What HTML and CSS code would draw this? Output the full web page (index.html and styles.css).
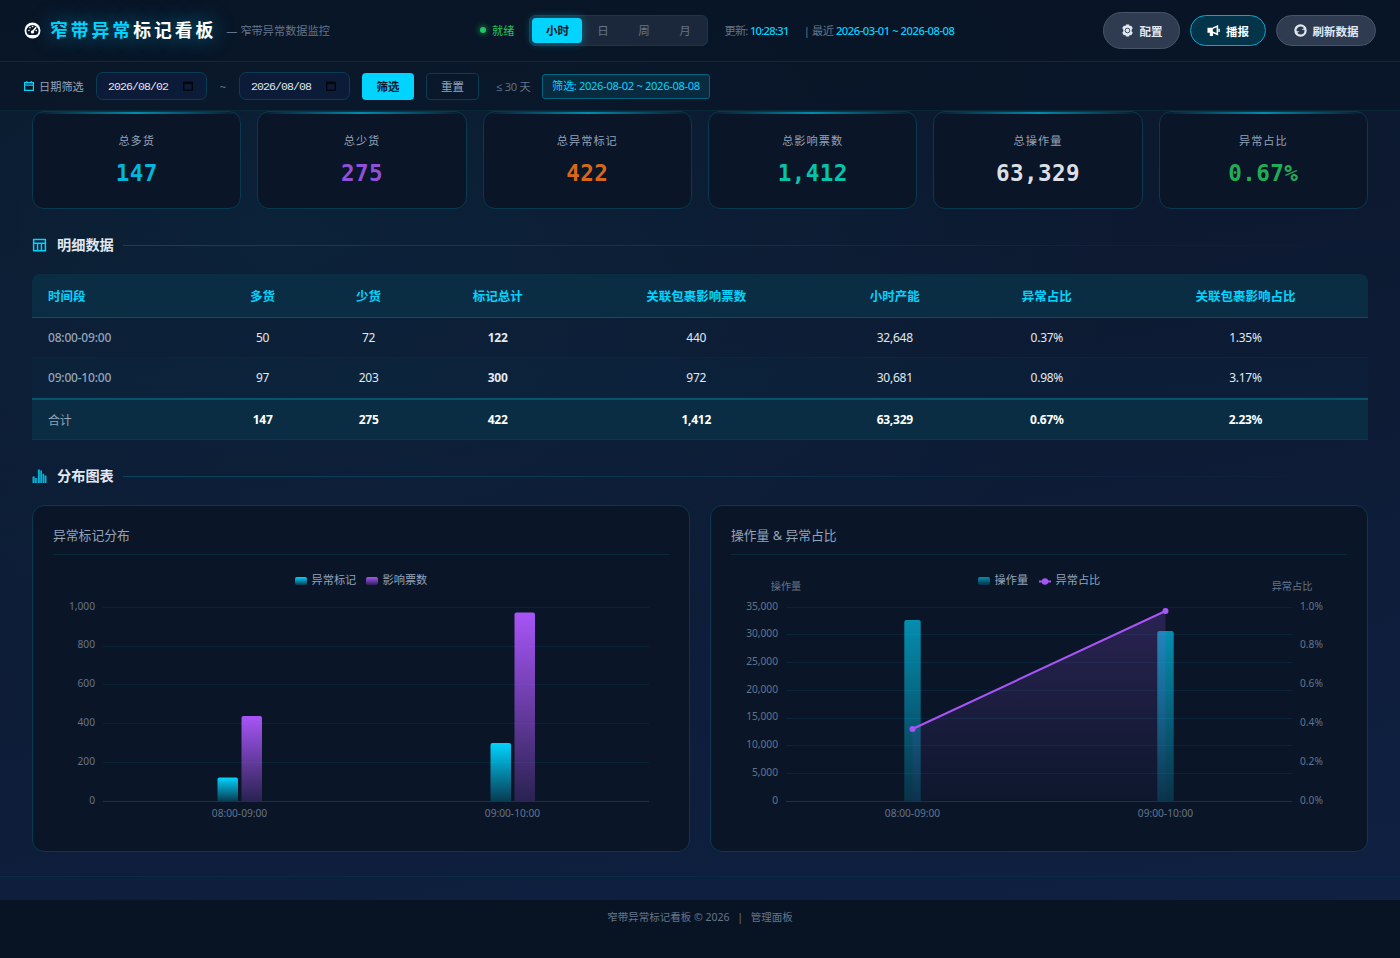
FILE: index.html
```
<!DOCTYPE html>
<html lang="zh-CN">
<head>
    <meta charset="UTF-8"/>
    <title>窄带异常标记看板</title>
    <link rel="stylesheet" href="styles.css">
</head>
<body>
    <div class="page">
        <!-- Header -->
        <header class="header">
            <div class="brand">
                <svg class="brand-icon" viewBox="0 0 16 16"><circle cx="8" cy="8" r="7.500" fill="#fff"/><path d="M3.2 11.5A5.6 5.6 0 1 1 12.8 11.5L11 12.2H5Z" fill="#0a1628"/><path d="M4.6 8h.1M5.6 5.4h.1M8 4.3h.1M11.5 8h.1M7.8 9.4L11 5.4" stroke="#fff" stroke-width="1.5" stroke-linecap="round"/><circle cx="8" cy="9.3" r="1.6" fill="#fff"/></svg>
                <h1><span>窄带异常</span>标记看板</h1>
                <small>— 窄带异常数据监控</small>
            </div>
            <div class="center">
                <span class="status"><i></i>就绪</span>
                <div class="tabs">
                    <a class="active">小时</a>
                    <a>日</a>
                    <a>周</a>
                    <a>月</a>
                </div>
                <span class="info">更新: <b>10:28:31</b></span>
                <span class="info range">| 最近 <b>2026-03-01 ~ 2026-08-08</b></span>
            </div>
            <div class="actions">
                <button class="btn config"><svg viewBox="0 0 14 14"><path d="M5.3 .5h3.4l.5 1.700 1.800-.4 1.700 2.900L11.500 6v2l1.200 1.300-1.700 2.900-1.800-.4-.5 1.700H5.300l-.5-1.700-1.800.4-1.700-2.900L2.500 8V6L1.300 4.700 3 1.800l1.800.4Z" fill="currentColor"/><circle cx="7" cy="7" r="2.500" fill="none" stroke="#334155" stroke-width="1"/></svg>配置</button>
                <button class="btn report"><svg viewBox="0 0 14 14"><path d="M.5 4h5L12 1v11.500L6.500 10v3H3V9.500H.5Z" fill="currentColor"/><path d="M6.300 5.300L10.300 3.600v6.200L6.300 8.100Z" fill="#04344a"/><path d="M13 5v3.500" stroke="currentColor" stroke-width="1.600"/></svg>播报</button>
                <button class="btn"><svg viewBox="0 0 14 14"><circle cx="7" cy="7" r="5.500" fill="none" stroke="currentColor" stroke-width="2.400"/><path d="M8.200 6.200h4.500V3ZM5.800 7.800H1.300V11Z" fill="currentColor"/></svg>刷新数据</button>
            </div>
        </header>

        <!-- Date filter -->
        <div class="filter">
            <span class="filter-label"><svg viewBox="0 0 10 10"><path d="M.6 1.700h8.800v7.600H.6ZM.6 4.200h8.800M2.800 0v2.600M7.200 0v2.600" fill="none" stroke="#00d4ff" stroke-width="1.200"/></svg>日期筛选</span>
            <span class="date">2026/08/02<svg viewBox="0 0 10 10"><path d="M.7 1.500h8.600v7.800H.7Z" fill="none" stroke="#02060c" stroke-width="1.400"/><path d="M.7 2h8.600" stroke="#02060c" stroke-width="2.400"/></svg></span>
            <span class="tilde">~</span>
            <span class="date">2026/08/08<svg viewBox="0 0 10 10"><path d="M.7 1.500h8.600v7.800H.7Z" fill="none" stroke="#02060c" stroke-width="1.400"/><path d="M.7 2h8.600" stroke="#02060c" stroke-width="2.400"/></svg></span>
            <button class="apply">筛选</button>
            <button class="reset">重置</button>
            <span class="limit">≤ 30 天</span>
            <span class="tag">筛选: 2026-08-02 ~ 2026-08-08</span>
        </div>

        <main>
            <!-- Summary cards -->
            <div class="cards">
                <div class="card"><span>总多货</span><strong class="cyan">147</strong></div>
                <div class="card"><span>总少货</span><strong class="purple">275</strong></div>
                <div class="card"><span>总异常标记</span><strong class="orange">422</strong></div>
                <div class="card"><span>总影响票数</span><strong class="teal">1,412</strong></div>
                <div class="card"><span>总操作量</span><strong class="white">63,329</strong></div>
                <div class="card"><span>异常占比</span><strong class="green">0.67%</strong></div>
            </div>

            <h2 class="section">
                <svg viewBox="0 0 14 14"><path d="M1.500 1.500h11v10.500h-11ZM1 4.800h12M5.200 5v7M8.800 5v7" fill="none" stroke="#00d4ff" stroke-width="1.400" stroke-linejoin="round"/></svg>
                明细数据
            </h2>

            <table>
                <colgroup>
                    <col class="c-time"><col class="c-small"><col class="c-small"><col class="c-mid">
                    <col class="c-wide"><col class="c-mid"><col class="c-mid"><col class="c-wide">
                </colgroup>
                <thead>
                    <tr><th>时间段</th><th>多货</th><th>少货</th><th>标记总计</th><th>关联包裹影响票数</th><th>小时产能</th><th>异常占比</th><th>关联包裹影响占比</th></tr>
                </thead>
                <tbody>
                    <tr><td>08:00-09:00</td><td>50</td><td>72</td><td><b>122</b></td><td>440</td><td>32,648</td><td>0.37%</td><td>1.35%</td></tr>
                    <tr><td>09:00-10:00</td><td>97</td><td>203</td><td><b>300</b></td><td>972</td><td>30,681</td><td>0.98%</td><td>3.17%</td></tr>
                </tbody>
                <tfoot>
                    <tr><td>合计</td><td>147</td><td>275</td><td>422</td><td>1,412</td><td>63,329</td><td>0.67%</td><td>2.23%</td></tr>
                </tfoot>
            </table>

            <h2 class="section">
                <svg viewBox="0 0 14 14"><path d="M.5 7h2v6h-2ZM2.900 8.500h1.600V13H2.900ZM5.500 .5h1.800V13H5.500ZM7.700 1.500h1.600V13H7.700ZM9.800 4.500h1.600V13H9.800ZM11.800 6h1.700v7h-1.700Z" fill="#00b8de"/></svg>
                分布图表
            </h2>

            <div class="charts">
                <div class="chart">
                    <h3>异常标记分布</h3>
                    <svg width="616" height="276" viewBox="0 0 616 276">
                        <defs>
                            <linearGradient id="cyan" x2="0" y2="1"><stop stop-color="#00d4ff"/><stop offset="1" stop-color="#00d4ff" stop-opacity=".2"/></linearGradient>
                            <linearGradient id="purple" x2="0" y2="1"><stop stop-color="#a855f7"/><stop offset="1" stop-color="#a855f7" stop-opacity=".2"/></linearGradient>
                        </defs>
                        <!-- legend -->
                        <rect x="242" y="22" width="12" height="8" rx="2" fill="url(#cyan)"/>
                        <text class="legend" x="258.500" y="29">异常标记</text>
                        <rect x="313" y="22" width="12" height="8" rx="2" fill="url(#purple)"/>
                        <text class="legend" x="329.500" y="29">影响票数</text>
                        <path class="grid" d="M50 52.500H596M50 91.500H596M50 129.500H596M50 168.500H596M50 207.500H596"/>
                        <g class="end">
                            <text x="42" y="55">1,000</text>
                            <text x="42" y="93">800</text>
                            <text x="42" y="132">600</text>
                            <text x="42" y="171">400</text>
                            <text x="42" y="210">200</text>
                            <text x="42" y="249">0</text>
                        </g>
                        <path fill="url(#cyan)" d="M164.500 246V224.500a2 2 0 0 1 2-2h16.500a2 2 0 0 1 2 2V246Z"/>
                        <path fill="url(#purple)" d="M188.500 246V163a2 2 0 0 1 2-2h16.500a2 2 0 0 1 2 2V246Z"/>
                        <path fill="url(#cyan)" d="M437.500 246V190a2 2 0 0 1 2-2h16.500a2 2 0 0 1 2 2V246Z"/>
                        <path fill="url(#purple)" d="M461.500 246V59.500a2 2 0 0 1 2-2h16.500a2 2 0 0 1 2 2V246Z"/>
                        <path class="axis" d="M50 246.500H596"/>
                        <g class="mid">
                            <text x="186.500" y="262">08:00-09:00</text>
                            <text x="459.500" y="262">09:00-10:00</text>
                        </g>
                    </svg>
                </div>
                <div class="chart">
                    <h3>操作量 &amp; 异常占比</h3>
                    <svg width="616" height="276" viewBox="0 0 616 276">
                        <defs>
                            <linearGradient id="volume" x2="0" y2="1"><stop stop-color="#00d4ff" stop-opacity=".63"/><stop offset="1" stop-color="#00d4ff" stop-opacity=".15"/></linearGradient>
                            <linearGradient id="area" x2="0" y2="1"><stop stop-color="#a855f7" stop-opacity=".2"/><stop offset="1" stop-color="#a855f7" stop-opacity=".02"/></linearGradient>
                        </defs>
                        <!-- legend -->
                        <rect x="247" y="22" width="12" height="8" rx="2" fill="url(#volume)"/>
                        <text class="legend" x="263.500" y="29">操作量</text>
                        <path d="M308 26.500h12" stroke="#a855f7" stroke-width="2"/>
                        <circle cx="314" cy="26.500" r="3.200" fill="#a855f7"/>
                        <text class="legend" x="324.500" y="29">异常占比</text>
                        <path class="grid" d="M55 52.500H561M55 79.500H561M55 107.500H561M55 135.500H561M55 163.500H561M55 190.500H561M55 218.500H561"/>
                        <g class="mid">
                            <text x="55" y="35">操作量</text>
                            <text x="561" y="35">异常占比</text>
                        </g>
                        <g class="end">
                            <text x="47" y="55">35,000</text>
                            <text x="47" y="82">30,000</text>
                            <text x="47" y="110">25,000</text>
                            <text x="47" y="138">20,000</text>
                            <text x="47" y="165">15,000</text>
                            <text x="47" y="193">10,000</text>
                            <text x="47" y="221">5,000</text>
                            <text x="47" y="249">0</text>
                        </g>
                        <g>
                            <text x="569" y="55">1.0%</text>
                            <text x="569" y="93">0.8%</text>
                            <text x="569" y="132">0.6%</text>
                            <text x="569" y="171">0.4%</text>
                            <text x="569" y="210">0.2%</text>
                            <text x="569" y="249">0.0%</text>
                        </g>
                        <path fill="url(#volume)" d="M173.300 246V67a2 2 0 0 1 2-2h12.400a2 2 0 0 1 2 2V246Z"/>
                        <path fill="url(#volume)" d="M426.300 246V78a2 2 0 0 1 2-2h12.400a2 2 0 0 1 2 2V246Z"/>
                        <path class="axis" d="M55 246.500H561"/>
                        <path fill="url(#area)" d="M181.500 174L434.500 56V246H181.500Z"/>
                        <path d="M181.500 174L434.500 56" stroke="#a855f7" stroke-width="2"/>
                        <circle cx="181.500" cy="174" r="3" fill="#a855f7"/>
                        <circle cx="434.500" cy="56" r="3" fill="#a855f7"/>
                        <g class="mid">
                            <text x="181.500" y="262">08:00-09:00</text>
                            <text x="434.500" y="262">09:00-10:00</text>
                        </g>
                    </svg>
                </div>
            </div>
        </main>
    </div>
    <footer>窄带异常标记看板 © 2026 <i>|</i> 管理面板</footer>
</body>
</html>
```
FILE: styles.css
```
* {
    margin: 0;
    padding: 0;
    box-sizing: border-box;
}

body {
    height: 958px;
    overflow: hidden;
    background: #081424;
    color: #e2e8f0;
    font: 11.2px "Noto Sans", "Noto Sans CJK SC", sans-serif;
}

svg {
    display: block;
    flex: none;
}

button {
    font: inherit;
    cursor: pointer;
}

.page {
    height: 900px;
    background:
        radial-gradient(ellipse at 20% 25%, rgba(0, 212, 255, 0.05), transparent 55%),
        linear-gradient(170deg, #0a1628 0%, #0d1b35 55%, #0f2042 100%);
}

/* Header */
.header {
    display: flex;
    justify-content: space-between;
    align-items: center;
    height: 62px;
    padding: 0 24px;
    background: rgba(8, 20, 36, 0.75);
    border-bottom: 1px solid #0b2c40;
}

.brand {
    display: flex;
    align-items: center;
    width: 307px;
    padding-bottom: 1px;
    white-space: nowrap;
}

.brand-icon {
    width: 17px;
    height: 17px;
    margin-right: 9px;
}

.brand h1 {
    font-size: 17.8px;
    letter-spacing: 3px;
    line-height: 24px;
    color: #fff;
    text-shadow: 0 0 20px rgba(0, 212, 255, 0.5);
}

.brand h1 span {
    color: #00d4ff;
}

.brand small {
    margin-left: 10px;
    font-size: 11.2px;
    color: #64748b;
}

.center {
    display: flex;
    align-items: center;
    width: 474px;
    white-space: nowrap;
}

.status {
    display: flex;
    align-items: center;
    gap: 6px;
    width: 35px;
    margin-right: 15px;
    padding-bottom: 1px;
    color: #22c55e;
}

.status i {
    flex: none;
    width: 6px;
    height: 6px;
    border-radius: 50%;
    background: #22c55e;
    box-shadow: 0 0 6px #22c55e;
}

.tabs {
    display: flex;
    flex: none;
    width: 179px;
    height: 31px;
    padding: 2px;
    border: 1px solid #133a50;
    border-radius: 6px;
    background: #1b283b;
}

.tabs a {
    flex: 1;
    line-height: 25px;
    text-align: center;
    font-size: 11.5px;
    color: #64748b;
}

.tabs .active {
    flex: 0 0 50px;
    border-radius: 4px;
    background: #00d4ff;
    box-shadow: 0 0 10px rgba(0, 212, 255, 0.4);
    color: #0a1628;
    font-weight: bold;
}

.info {
    margin-left: 16px;
    padding-bottom: 2px;
    color: #64748b;
    letter-spacing: -0.7px;
}

.info b {
    font-weight: 500;
    color: #00d4ff;
}

.info.range {
    margin-left: 15px;
    letter-spacing: -0.45px;
}

.actions {
    display: flex;
    align-items: center;
    gap: 10px;
}

.btn {
    display: flex;
    align-items: center;
    justify-content: center;
    gap: 6px;
    width: 100px;
    height: 31px;
    border: 1px solid #475569;
    border-radius: 20px;
    background: #2e3b50;
    color: #e2e8f0;
    font-size: 11.5px;
    font-weight: bold;
}

.btn svg {
    width: 13px;
    height: 13px;
}

.btn.config {
    width: 77px;
    height: 37px;
}

.btn.report {
    width: 76px;
    border-color: #00a9cf;
    background: #04344a;
    color: #fff;
}

/* Date filter */
.filter {
    display: flex;
    align-items: center;
    gap: 12px;
    height: 49px;
    padding: 0 24px;
    background: rgba(8, 20, 36, 0.6);
    border-bottom: 1px solid #0b2839;
    white-space: nowrap;
}

.filter-label {
    display: flex;
    align-items: center;
    gap: 5px;
    width: 60px;
    padding-bottom: 1px;
    color: #94a3b8;
}

.filter-label svg {
    width: 10px;
    height: 10px;
}

.date {
    display: flex;
    align-items: center;
    justify-content: space-between;
    width: 111px;
    height: 28px;
    padding: 0 13px 0 11px;
    border: 1px solid #0b3c56;
    border-radius: 7px;
    background: #0c1b37;
    color: #e2e8f0;
    font: 500 11.5px "Liberation Mono", monospace;
    letter-spacing: -0.9px;
}

.date svg {
    width: 10px;
    height: 10px;
}

.tilde {
    width: 8px;
    text-align: center;
    color: #64748b;
}

.apply, .reset {
    width: 52px;
    height: 27px;
    border: 0;
    border-radius: 4px;
    background: #00d4ff;
    color: #0a1628;
    font-size: 11.5px;
    font-weight: bold;
}

.reset {
    width: 53px;
    border: 1px solid #0b3c52;
    background: none;
    color: #94a3b8;
    font-weight: normal;
}

.limit {
    width: 39px;
    padding-left: 5px;
    color: #64748b;
    font-family: "Open Sans", "Noto Sans CJK SC", sans-serif;
    letter-spacing: -0.3px;
}

.tag {
    width: 168px;
    height: 25px;
    line-height: 22px;
    border: 1px solid #006680;
    border-radius: 3px;
    background: #082b40;
    color: #00d4ff;
    text-align: center;
    letter-spacing: -0.35px;
}

main {
    height: 766px;
    padding: 0 32px;
    border-bottom: 1px solid #0b2a43;
}

/* Summary cards */
.cards {
    display: grid;
    grid-template-columns: repeat(6, 1fr);
    gap: 16px;
}

.card {
    display: flex;
    flex-direction: column;
    align-items: center;
    height: 98px;
    border: 1px solid #073a50;
    border-radius: 12px;
    background:
        linear-gradient(90deg, transparent, #008cae, transparent) top / 100% 2px no-repeat,
        #0a1528;
}

.card span {
    margin-top: 19px;
    line-height: 19px;
    letter-spacing: 1px;
    color: #94a3b8;
}

.card strong {
    margin-top: 7px;
    font: bold 22.6px/32px "DejaVu Sans Mono", monospace;
    letter-spacing: 0.4px;
}

.cyan { color: #02b5dd; }
.purple { color: #9150d9; }
.orange { color: #d8671a; }
.teal { color: #05c4ac; }
.white { color: #dcdfe4; }
.green { color: #20ad56; }

/* Section title with a fading rule */
.section {
    display: flex;
    align-items: center;
    height: 20px;
    margin: 26px 0 19px;
    font-size: 14.2px;
    line-height: 20px;
}

.section svg {
    width: 15px;
    height: 15px;
    margin-right: 10px;
}

.section::after {
    content: "";
    flex: 1;
    height: 1px;
    margin-left: 9px;
    background: linear-gradient(90deg, #0a4660, transparent);
}

/* Detail table */
table {
    width: 1336px;
    table-layout: fixed;
    border-spacing: 0;
    border-radius: 8px 8px 0 0;
    overflow: hidden;
    font-size: 12px;
    letter-spacing: -0.25px;
}

.c-time { width: 177.5px; }
.c-small { width: 106px; }
.c-mid { width: 152px; }
.c-wide { width: 245px; }

th, td {
    height: 40px;
    text-align: center;
    border-bottom: 1px solid #0b273c;
}

th {
    height: 44px;
    font-size: 12.5px;
    letter-spacing: 0;
    color: #00d4ff;
    background: #0b2d43;
    border-bottom-color: #075069;
}

th:first-child, td:first-child {
    padding-left: 16px;
    text-align: left;
}

td:first-child {
    color: #94a3b8;
    font-weight: 500;
    letter-spacing: -0.2px;
}

tbody tr:nth-child(2) td {
    background: rgba(0, 212, 255, 0.02);
}

tfoot td {
    height: 42px;
    border-top: 2px solid #06536d;
    border-bottom-color: #0b3950;
    background: #0a2d43;
    font-weight: bold;
    color: #fff;
}

tfoot td:first-child {
    font-weight: normal;
}

/* Charts */
.charts {
    display: grid;
    grid-template-columns: 658px 658px;
    gap: 20px;
}

.chart {
    height: 347px;
    padding: 0 20px;
    border: 1px solid #073a50;
    border-radius: 12px;
    background: #0a1628;
}

.chart h3 {
    height: 49px;
    padding-top: 11px;
    border-bottom: 1px solid #0a2a3c;
    font-size: 12.8px;
    font-weight: normal;
    line-height: 36px;
    color: #94a3b8;
}

.chart text {
    font-size: 10.2px;
    fill: #64748b;
}

.chart .legend {
    font-size: 11.2px;
    fill: #94a3b8;
}

.end { text-anchor: end; }
.mid { text-anchor: middle; }

.grid {
    stroke: #0a2336;
}

.axis {
    stroke: #0a3a4f;
}

footer {
    padding-top: 9px;
    text-align: center;
    color: #64748b;
    font-size: 10.5px;
    line-height: 17px;
}

footer i {
    margin: 0 5px;
    font-style: normal;
}
```
